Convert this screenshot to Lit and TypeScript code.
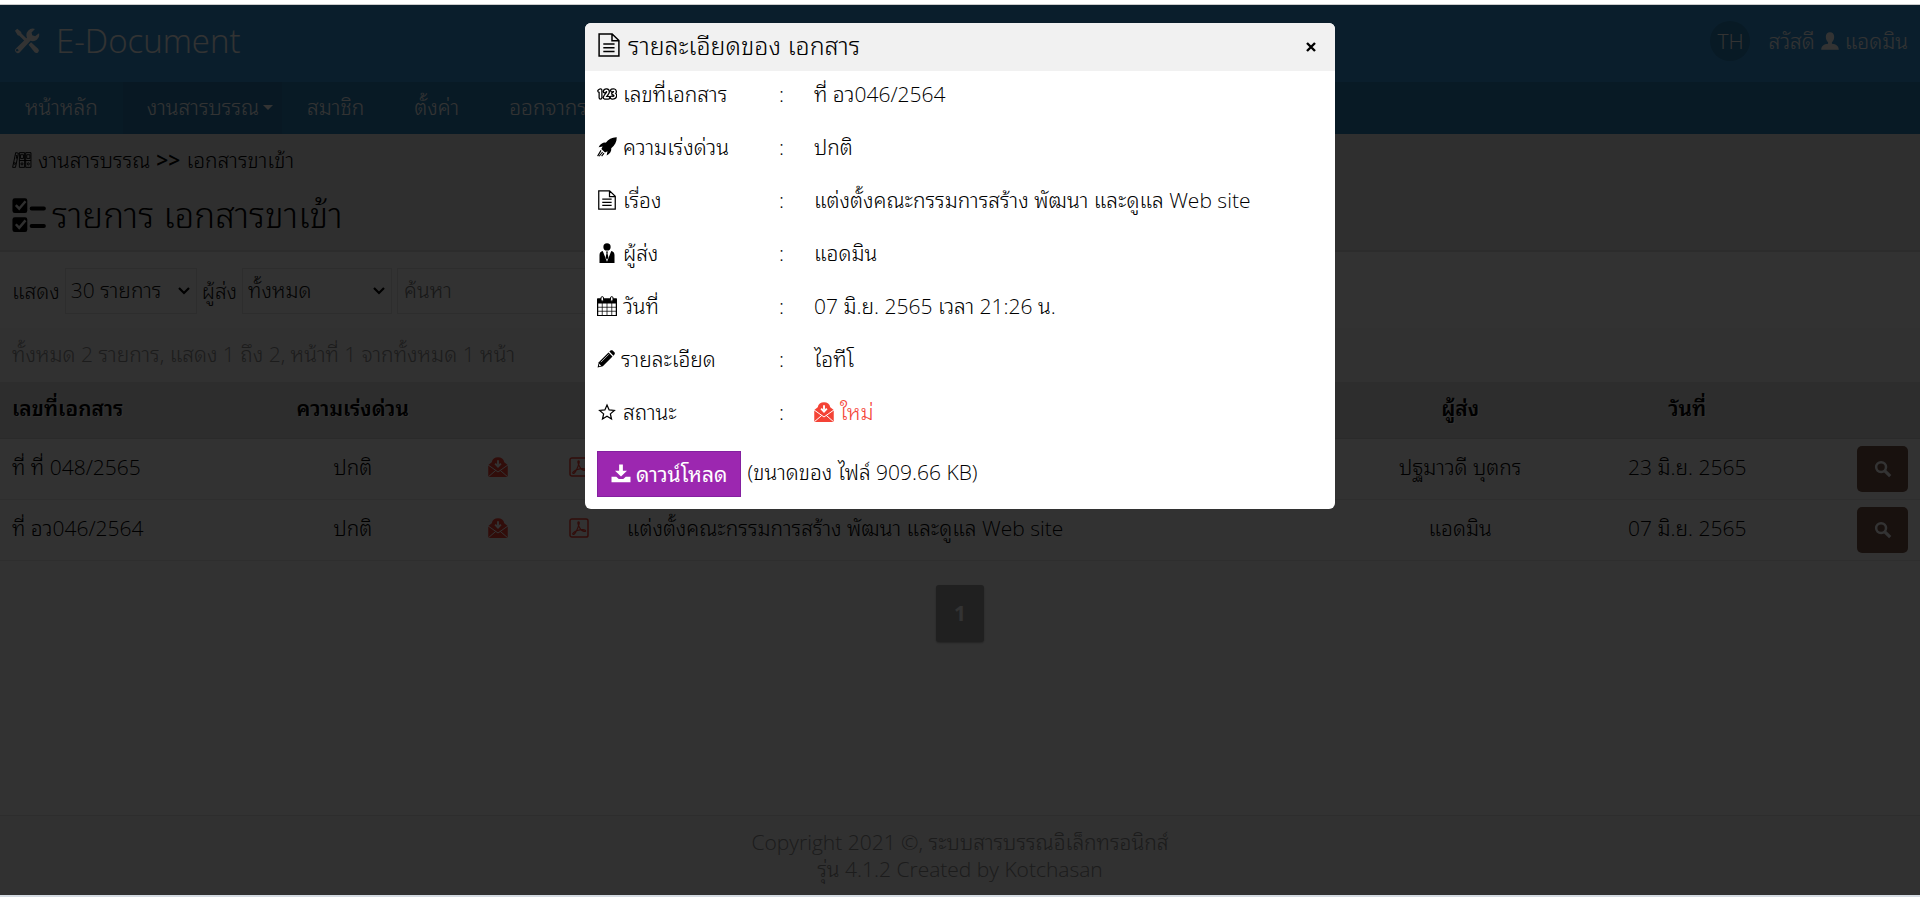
import { LitElement, html, css, svg } from "lit";

const ICONS: Record<string, unknown> = {
  tools: svg`<path d="M.6 1.7 2 .5l2.400 1.900.2 1 4.200 4.200-1.300 1.300L3.300 4.700l-1-.2z"/><path d="M15.400 3.200a4 4 0 0 1-5.300 4.700L3.600 14.900a1.600 1.600 0 0 1-2.400-2.300L8 6a4 4 0 0 1 4.900-5.400L10.800 2.800l.4 1.700 1.800.5zM2.400 13.100a.7.7 0 1 0 .1.1z" fill-rule="evenodd"/><path d="m9 10.300 1.500-1.500 4.300 3.900a1.500 1.500 0 0 1-2.100 2.200z"/>`,
  doc: svg`<path d="M1.400.7h8.700l4.500 4.300v10.300H1.400zM10 .9v4.300h4.400M4.200 7.300h7.500M4.200 9.800h7.500M4.200 12.300h7.500" fill="none" stroke="currentColor" stroke-width="1"/>`,
  rocket: svg`<path d="M15.800.2c-3.800-.1-6.700 1.700-8.800 4.300-2-.3-4.200.8-5.700 3.700l3.200-.7-1 2 2.900 2.900 2-1-.7 3.400c2.900-1.500 4-3.700 3.700-5.800C14.100 6.900 15.900 4 15.800.2z"/><path d="M3.200 10.700.5 15.300M4.500 12 1.700 15.400M5.600 12.900 3.700 15.300" stroke="currentColor" stroke-width=".9"/>`,
  tie: svg`<circle cx="8" cy="3.100" r="2.900"/><path d="M2 16V9.600c0-1.900 1-3 2.600-3.200L8 15l3.400-8.600C13 6.600 14 7.700 14 9.600V16z"/><path d="M7.200 6.700h1.600l-.4 1.400.7 3.400L8 13.300l-1.100-1.800.7-3.400z"/>`,
  calendar: svg`<path d="M.5 2.500h15v13.200H.5z" fill="none" stroke="currentColor"/><path d="M.5 2h15v4H.5z"/><path d="M.5 9h15M.5 12.200h15M4.200 5v10.500M8 5v10.500M11.800 5v10.500" stroke="currentColor" stroke-width=".6"/><rect x="3.200" y=".5" width="2" height="3.600" rx="1" fill="#fff" stroke="currentColor" stroke-width=".8"/><rect x="10.800" y=".5" width="2" height="3.600" rx="1" fill="#fff" stroke="currentColor" stroke-width=".8"/>`,
  pencil: svg`<path d="m10.200 2.200 3.600 3.600-8.600 8.600L.5 15.500l1.100-4.700z"/><path d="M11 1.400 12 .5c.5-.5 1.400-.5 1.900 0l1.600 1.600c.5.5.5 1.400 0 1.900l-.9 1z"/><path d="m3.500 10.800 7-7" stroke="#fff" stroke-width=".6"/><path d="m1.900 12.300 1.800 1.800-1.900.4z" fill="#fff"/>`,
  star: svg`<path d="m8 2.400 1.700 3.900 4.200.4-3.200 2.800.9 4.100L8 11.400l-3.600 2.200.9-4.100-3.200-2.800 4.200-.4z" fill="none" stroke="currentColor" stroke-width="1"/>`,
  mail: svg`<path d="M.2 6.300 3 4.200C3.400 1.500 5.400.2 8 .2s4.600 1.300 5 4l2.800 2.100V16H.2z"/><path d="M0 6.300 8 12l8-5.700M.2 15.900l6-5.200M15.800 15.900l-6-5.200" fill="none" stroke="#fff" stroke-width=".8"/><path d="M8 2.600v3.600M5.700 5.300 8 7.700l2.300-2.400" fill="none" stroke="#fff" stroke-width="1.500"/>`,
  download: svg`<path d="M6.500.3h3v5h3.300L8 10 3.200 5.300h3.300z"/><path d="M.4 10.200h3.800l2 1.800h3.600l2-1.800h3.800v4.300H.4z"/>`,
  search: svg`<circle cx="6.300" cy="6.300" r="4.400" fill="none" stroke="currentColor" stroke-width="2.200"/><path d="m9.600 9.600 4.800 4.800" stroke="currentColor" stroke-width="2.800"/>`,
  user: svg`<path d="M8 .3c2.400 0 3.700 1.600 3.700 4 0 2.200-.8 3.900-2 4.900v1.200c3.600.3 6.100 2 6.100 5.300H.2C.2 12.400 2.700 10.700 6.300 10.400V9.200c-1.200-1-2-2.700-2-4.900 0-2.400 1.300-4 3.700-4z"/>`,
  check: svg`<rect x=".2" y=".5" width="6.600" height="6.600" rx="1"/><rect x=".2" y="9" width="6.600" height="6.600" rx="1"/><path d="m1.700 3.600 1.500 1.600L6 1.900M1.700 12.100l1.500 1.600L6 10.400" fill="none" stroke="#ebebeb" stroke-width="1.100"/><path d="M8.700 5.100h5.500M8.700 12.900h5.500" stroke="currentColor" stroke-width="1.700" stroke-linecap="round"/>`,
  binders: svg`<g fill="none" stroke="currentColor" stroke-width=".9"><path d="M7 1.500h5v14H7zM13 1.500h5v14h-5zM3.500 1.500l2.600.5-2.800 13.500H.6z"/><path d="M8 3.500h3v3.500H8zM14 3.500h3v3.500h-3zM7 9h11M3.400 4l1.200.3-.6 3"/><circle cx="9.500" cy="12.200" r="1"/><circle cx="15.500" cy="12.200" r="1"/><circle cx="2.600" cy="11.800" r=".8"/></g>`,
  numbers: svg`<g fill="none" stroke-linejoin="round" stroke-linecap="round"><path d="M1.800 5.600 2.800 5v6M6.200 6C6.500 4.600 8.900 4.600 8.800 6.400c-.1 1.400-2.200 2.600-2.700 4.500h3M12 5.200c2.700-1 3.200 1.700.9 2.500 2.700.3 2.200 4-1.200 3.100" stroke="currentColor" stroke-width="3.200"/><path d="M1.800 5.600 2.800 5v6M6.200 6C6.500 4.600 8.900 4.600 8.800 6.400c-.1 1.400-2.200 2.600-2.700 4.500h3M12 5.200c2.700-1 3.200 1.700.9 2.500 2.700.3 2.200 4-1.200 3.100" stroke="#fff" stroke-width="1.200"/></g>`,
  pdf: svg`<rect x=".8" y=".8" width="14.400" height="14.400" rx="1.500" fill="none" stroke="currentColor" stroke-width="1.200"/><path d="M7.700 3c-1.500 0 .2 4.200 1.600 6 1.500 1.800 4.300 2.300 4 1.100-.3-1.400-4.500-.7-6.500-.1-2.100.7-4.600 2.300-3.600 3 1.200.8 3.200-3.400 4-5.500C7.900 5.600 8.700 3 7.700 3z" fill="none" stroke="currentColor" stroke-width="1"/>`,
};

const icon = (name: string, size = "", box = "0 0 16 16") =>
  html`<svg class="icon ${size}" viewBox=${box} aria-hidden="true">${ICONS[name]}</svg>`;

const DETAILS = [
  { icon: "numbers", size: "", label: "เลขที่เอกสาร", value: "ที่ อว046/2564" },
  { icon: "rocket", size: "", label: "ความเร่งด่วน", value: "ปกติ" },
  { icon: "doc", size: "", label: "เรื่อง", value: "แต่งตั้งคณะกรรมการสร้าง พัฒนา และดูแล Web site" },
  { icon: "tie", size: "", label: "ผู้ส่ง", value: "แอดมิน" },
  { icon: "calendar", size: "", label: "วันที่", value: "07 มิ.ย. 2565 เวลา 21:26 น." },
  { icon: "pencil", size: "s18", label: "รายละเอียด", value: "ไอทีโ" },
  { icon: "star", size: "", label: "สถานะ", value: "ใหม่", fresh: true },
];

const ROWS = [
  { no: "ที่ ที่ 048/2565", urgency: "ปกติ", subject: "", sender: "ปฐมาวดี บุตกร", date: "23 มิ.ย. 2565" },
  { no: "ที่ อว046/2564", urgency: "ปกติ", subject: "แต่งตั้งคณะกรรมการสร้าง พัฒนา และดูแล Web site", sender: "แอดมิน", date: "07 มิ.ย. 2565" },
];

class AppRoot extends LitElement {
  static styles = css`
    :host {
      display: flex;
      flex-direction: column;
      min-height: 100vh;
      box-sizing: border-box;
      border-top: 4px solid #fff;
      border-bottom: 2px solid #d4dbe2;
      background: #fafafa;
      color: #000;
      font: 300 21px/28px "Open Sans", "Noto Sans Thai Looped", "Noto Sans", sans-serif;
    }
    * { box-sizing: border-box; }
    a { color: inherit; text-decoration: none; }
    h1, h2, p { margin: 0; font-weight: 300; }
    button, input, select { font: inherit; color: inherit; }
    .icon { width: 20px; height: 20px; fill: currentColor; flex: none; display: block; }
    .s18 { width: 18px; height: 18px; }
    .s24 { width: 24px; height: 24px; }
    .s26 { width: 26px; height: 26px; }
    .s36 { width: 36px; height: 36px; }

    .top {
      display: flex; align-items: center; justify-content: space-between;
      height: 78px; padding: 0 12px 6px; border-top: 1px solid #ccc;
      background: #3498db; color: #fff;
    }
    .brand { display: flex; align-items: center; gap: 16px; font-size: 33px; line-height: 40px; padding-left: 2px; }
    .account { display: flex; align-items: center; gap: 6px; }
    .lang {
      width: 40px; height: 40px; margin-right: 12px; border-radius: 50%;
      display: grid; place-items: center; background: #2980b9;
    }
    .menu { display: flex; background: #2980b9; color: #fff; }
    .menu a { display: flex; align-items: center; gap: 4px; padding: 11px 25px 13px; }
    .menu .active { background: #2879af; padding: 11px 9px 13px 24px; }
    .caret { border: 5px solid transparent; border-top-color: #fff; border-bottom: 0; }

    .heading { background: #ebebeb; padding: 12px 12px 9px; border-bottom: 2px solid #dcdcdc; }
    .crumbs { display: flex; align-items: center; gap: 6px; }
    .crumbs b { font-weight: 600; }
    .title { display: flex; align-items: center; gap: 4px; font-size: 35px; line-height: 52px; margin-top: 15px; }

    .filters { display: flex; align-items: center; gap: 5px; padding: 16px 12px 14px; color: #111; }
    .filters select, .filters input {
      height: 46px; padding: 0 6px 2px; border: 1px solid #e2e2e2; border-radius: 0; background: #fafafa;
    }
    .filters select {
      appearance: none; padding-left: 5px;
      background: #fafafa url("data:image/svg+xml,%3Csvg xmlns='http://www.w3.org/2000/svg' width='12' height='8'%3E%3Cpath d='m1 1 5 5 5-5' fill='none' stroke='%23000' stroke-width='2.200'/%3E%3C/svg%3E") no-repeat right 6px center;
    }
    .filters .count { width: 132px; }
    .filters .sender { width: 150px; }
    .filters .query { width: 240px; }
    .query::placeholder { color: #757575; opacity: 1; }
    .summary { background: #f5f5f5; color: #8c8c8c; padding: 12px 12px 14px; }

    .list { width: 100%; border-collapse: collapse; table-layout: fixed; }
    .list th { background: #e1e1e1; font-weight: 600; text-shadow: 1px 1px #fff; }
    .list th, .list td { height: 61px; padding: 0 12px 3px; text-align: center; border-bottom: 1px solid #e6e6e6; }
    .list th { height: 56px; border-color: #d0d0d0; }
    .list .left { text-align: left; }
    .list .subject { padding-left: 0; text-align: left; }
    .list .right { padding-bottom: 0; text-align: right; }
    .list .icon { margin: 0 auto; color: #f44336; }
    .c-no { width: 12.5%; } .c-urg { width: 11.75%; } .c-mail { width: 3.4%; } .c-pdf { width: 5%; }
    .c-from { width: 11.9%; } .c-date { width: 11.75%; } .c-act { width: 6.25%; }
    .view {
      width: 51px; height: 46px; padding: 0; border: 0; border-radius: 5px;
      background: #795548; color: #fff; vertical-align: middle;
    }
    .list .view .icon { color: #fff; }
    .pager { display: flex; justify-content: center; padding: 24px 0 28px; }
    .pager a {
      padding: 14px 18px 15px; border-radius: 3px; background: #9e9e9e; color: #fff;
      font-weight: 700; box-shadow: 0 1px 2px #aaa;
    }
    .footer {
      margin-top: auto; padding: 13px 12px 12px; border-top: 1px solid #e0e0e0;
      background: #f2f2f2; color: #8a8a8a; text-align: center; line-height: 27px;
    }

    .overlay {
      position: fixed; inset: 5px 0 2px; background: rgba(0, 0, 0, 0.8);
      display: flex; justify-content: center; align-items: flex-start; padding-top: 18px;
    }
    .modal { width: 750px; max-width: 100%; border-radius: 6px; overflow: hidden; background: #fff; }
    .modal-head {
      display: flex; align-items: center; justify-content: space-between;
      height: 48px; padding: 0 12px; background: #f1f1f1;
    }
    .modal-title { display: flex; align-items: center; gap: 7px; font-size: 25px; line-height: 36px; padding-bottom: 4px; }
    .close { width: 24px; height: 24px; padding: 7px; border: 0; background: none; }
    .close svg { display: block; width: 10px; height: 10px; }
    .details { width: 100%; border-collapse: collapse; }
    .details th, .details td { padding: 9px 0 16px; font-weight: 300; text-align: left; }
    .details .colon { width: 35px; }
    .details th { width: 194px; padding-left: 12px; }
    .pair { display: flex; align-items: center; gap: 6px; }
    .fresh { color: #f44336; }
    .actions { display: flex; align-items: center; gap: 6px; padding: 9px 12px 12px; }
    .save {
      display: flex; align-items: center; gap: 5px; height: 46px; padding: 0 13px;
      border: 1px solid #8420a0; background: #9c27b0; color: #fff; font-weight: 400;
    }
    .size { padding-bottom: 4px; }
  `;

  render() {
    return html`
      <header class="top">
        <a class="brand" href="#">${icon("tools", "s26")}<span>E-Document</span></a>
        <div class="account">
          <a class="lang" href="#">TH</a>
          <span>สวัสดี</span>${icon("user", "s18")}<a href="#">แอดมิน</a>
        </div>
      </header>
      <nav class="menu">
        <a href="#">หน้าหลัก</a>
        <a href="#" class="active">งานสารบรรณ<span class="caret"></span></a>
        <a href="#">สมาชิก</a>
        <a href="#">ตั้งค่า</a>
        <a href="#">ออกจากระบบ</a>
      </nav>
      <main>
        <div class="heading">
          <div class="crumbs">${icon("binders", "", "0 0 19 17")}<a href="#">งานสารบรรณ</a><b>&gt;&gt;</b><span>เอกสารขาเข้า</span></div>
          <h1 class="title">${icon("check", "s36")}<span>รายการ เอกสารขาเข้า</span></h1>
        </div>
        <form class="filters">
          <label for="count">แสดง</label>
          <select id="count" class="count"><option>30 รายการ</option></select>
          <label for="sender">ผู้ส่ง</label>
          <select id="sender" class="sender"><option>ทั้งหมด</option></select>
          <input class="query" type="search" aria-label="ค้นหา" placeholder="ค้นหา" />
        </form>
        <p class="summary">ทั้งหมด 2 รายการ, แสดง 1 ถึง 2, หน้าที่ 1 จากทั้งหมด 1 หน้า</p>
        <table class="list">
          <thead>
            <tr>
              <th class="c-no left">เลขที่เอกสาร</th><th class="c-urg">ความเร่งด่วน</th>
              <th class="c-mail"></th><th class="c-pdf"></th><th>เรื่อง</th>
              <th class="c-from">ผู้ส่ง</th><th class="c-date">วันที่</th><th class="c-act"></th>
            </tr>
          </thead>
          <tbody>
            ${ROWS.map((r) => html`<tr>
              <td class="left">${r.no}</td><td>${r.urgency}</td>
              <td>${icon("mail")}</td><td>${icon("pdf")}</td>
              <td class="subject">${r.subject}</td><td>${r.sender}</td><td>${r.date}</td>
              <td class="right"><button class="view" aria-label="รายละเอียด">${icon("search", "s18")}</button></td>
            </tr>`)}
          </tbody>
        </table>
        <nav class="pager"><a href="#">1</a></nav>
      </main>
      <footer class="footer">
        <p>Copyright 2021 ©, ระบบสารบรรณอิเล็กทรอนิกส์</p>
        <p>รุ่น 4.1.2 Created by Kotchasan</p>
      </footer>
      <div class="overlay">
        <section class="modal" role="dialog" aria-modal="true" aria-labelledby="modal-title">
          <div class="modal-head">
            <h2 class="modal-title" id="modal-title">${icon("doc", "s24")}<span>รายละเอียดของ เอกสาร</span></h2>
            <button class="close" aria-label="ปิด">
              <svg viewBox="0 0 10 10"><path d="m1 1 8 8M9 1 1 9" stroke="#000" stroke-width="2.400" /></svg>
            </button>
          </div>
          <table class="details">
            ${DETAILS.map((d) => html`<tr>
              <th scope="row"><span class="pair">${icon(d.icon, d.size)}${d.label}</span></th>
              <td class="colon">:</td>
              <td>${d.fresh ? html`<span class="pair fresh">${icon("mail")}${d.value}</span>` : d.value}</td>
            </tr>`)}
          </table>
          <div class="actions">
            <button class="save">${icon("download")}ดาวน์โหลด</button>
            <span class="size">(ขนาดของ ไฟล์ 909.66 KB)</span>
          </div>
        </section>
      </div>
    `;
  }
}
customElements.define("app-root", AppRoot);
